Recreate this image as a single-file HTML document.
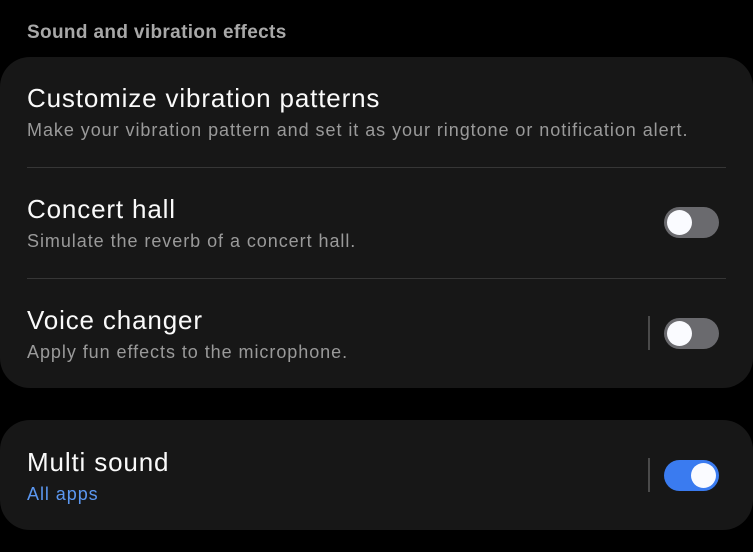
<!DOCTYPE html>
<html><head><style>
body{margin:0;width:753px;height:552px;background:#000;font-family:"Liberation Sans",sans-serif;position:relative;overflow:hidden}
.a{position:absolute;white-space:nowrap}
.card{position:absolute;left:0;width:753px;background:#171717;border-radius:30px}
.t{color:#fafafa;font-size:26px;letter-spacing:0.85px}
.s{color:#9a9a9a;font-size:18px;letter-spacing:0.95px}
.div{position:absolute;left:27px;width:699px;height:1px;background:#363636}
.tg{position:absolute;left:664px;width:55px;height:31px;border-radius:16px;background:#6a6a6e}
.tg i{position:absolute;top:3px;left:3px;width:25px;height:25px;border-radius:50%;background:#fafbff}
.tg.on{background:#3a7bf0}.tg.on i{left:27px}
.vl{position:absolute;left:648px;width:2px;height:34px;background:#4a4a4a}
</style></head><body>
<div class="a" style="left:27px;top:22px;color:#a8a8a8;font-size:19px;font-weight:bold;letter-spacing:0.35px">Sound and vibration effects</div>
<div class="card" style="top:57px;height:331px"></div>
<div class="a t" style="left:27px;top:83px">Customize vibration patterns</div>
<div class="a s" style="left:27px;top:120px">Make your vibration pattern and set it as your ringtone or notification alert.</div>
<div class="div" style="top:167px"></div>
<div class="a t" style="left:27px;top:194px">Concert hall</div>
<div class="a s" style="left:27px;top:231px">Simulate the reverb of a concert hall.</div>
<div class="tg" style="top:207px"><i></i></div>
<div class="div" style="top:278px"></div>
<div class="a t" style="left:27px;top:305px">Voice changer</div>
<div class="a s" style="left:27px;top:342px">Apply fun effects to the microphone.</div>
<div class="vl" style="top:316px"></div>
<div class="tg" style="top:318px"><i></i></div>
<div class="card" style="top:420px;height:110px"></div>
<div class="a t" style="left:27px;top:447px">Multi sound</div>
<div class="a s" style="left:27px;top:484px;color:#5b97f0">All apps</div>
<div class="vl" style="top:458px"></div>
<div class="tg on" style="top:460px"><i></i></div>
</body></html>
